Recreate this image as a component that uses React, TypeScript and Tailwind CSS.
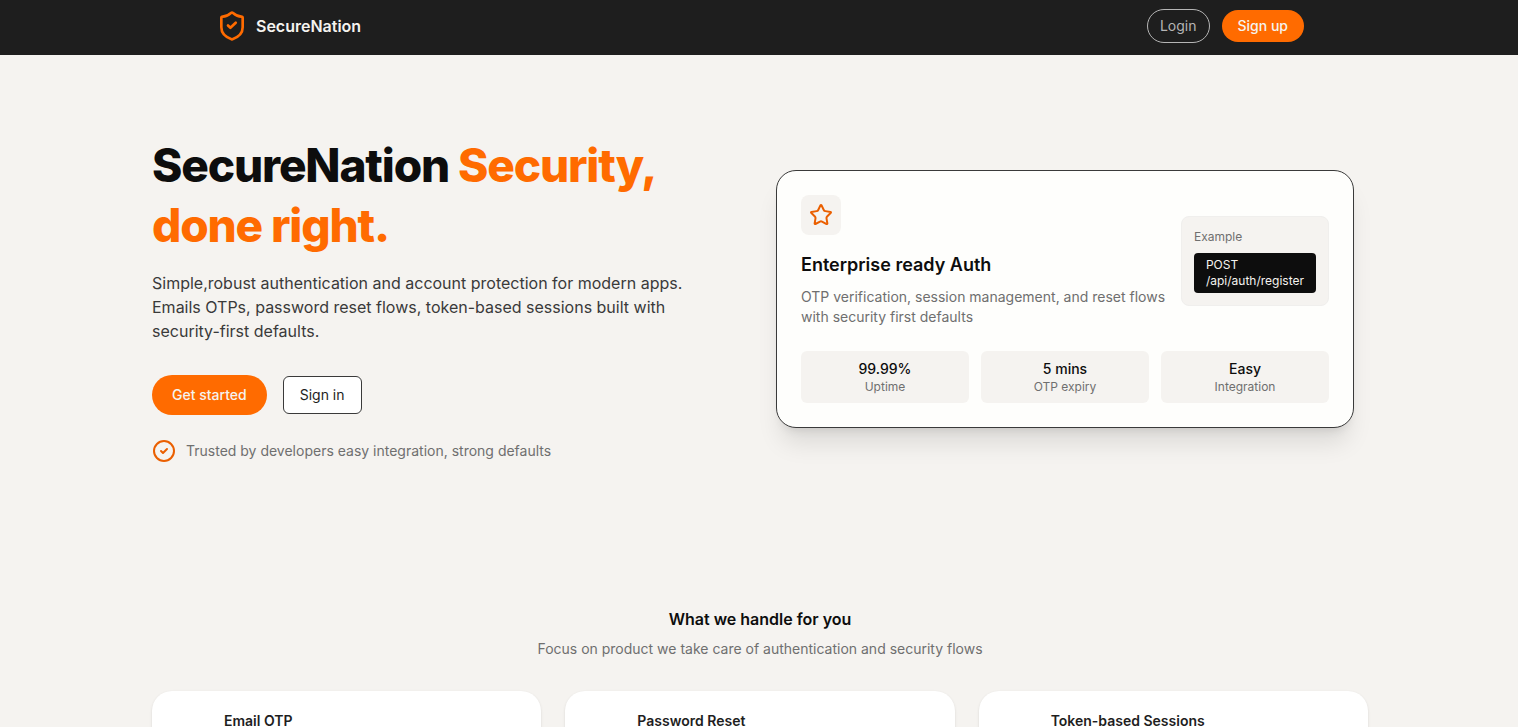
import { Star, CircleCheck } from 'lucide-react';

const stats = [
  { value: '99.99%', label: 'Uptime' },
  { value: '5 mins', label: 'OTP expiry' },
  { value: 'Easy', label: 'Integration' },
];

const features = ['Email OTP', 'Password Reset', 'Token-based Sessions'];

function ShieldLogo() {
  return (
    <svg
      className="w-8 h-8 text-[#ff6b00]"
      viewBox="0 0 24 24"
      fill="none"
      stroke="currentColor"
      strokeWidth="2"
      strokeLinecap="round"
      strokeLinejoin="round"
      aria-hidden="true"
    >
      <path d="M20 13c0 5-3.5 7.5-7.66 8.95a1 1 0 0 1-.67-.01C7.5 20.5 4 18 4 13V6a1 1 0 0 1 1-1c2 0 4.5-1.2 6.24-2.72a1.17 1.17 0 0 1 1.52 0C14.51 3.81 17 5 19 5a1 1 0 0 1 1 1z" />
      <path d="m9 11.6 1.8 1.7 4-3.8" />
    </svg>
  );
}

function Header() {
  return (
    <header className="bg-[#1e1e1e] pl-0.5">
      <div className="max-w-6xl mx-auto px-8 pt-[9px] pb-3 flex items-center justify-between">
        <a href="#" className="flex items-center gap-2">
          <ShieldLogo />
          <span className="text-base font-semibold text-[#f5f3ef]">SecureNation</span>
        </a>
        <nav className="flex items-center gap-3">
          <button className="px-3 py-1 rounded-full border border-[#b5b5b5] text-sm leading-6 text-[#b5b5b5]">
            Login
          </button>
          <button className="px-4 py-1 rounded-full bg-[#ff6b00] text-sm leading-6 font-medium text-[#f5f3ef]">
            Sign up
          </button>
        </nav>
      </div>
    </header>
  );
}

function AuthCard() {
  return (
    <div className="max-w-[578px] rounded-[20px] border border-[#3a3a3a] bg-[#fefefc] p-6 shadow-xl">
      <div className="flex items-center justify-between gap-3">
        <div>
          <div className="w-10 h-10 rounded-lg bg-[#f5f3f0] flex items-center justify-center">
            <Star size={24} className="text-[#ea5f00]" />
          </div>
          <h2 className="mt-4 text-lg font-semibold text-[#0d0d0d]">Enterprise ready Auth</h2>
          <p className="mt-2 text-sm text-[#6f6f6f]">
            OTP verification, session management, and reset flows with security first defaults
          </p>
        </div>
        <div className="shrink-0 rounded-lg border border-[#f0efed] bg-[#f5f3f0] p-3">
          <p className="text-xs text-[#6f6f6f]">Example</p>
          <code className="mt-2 block rounded bg-[#0d0d0d] px-3 py-1 font-[Inter,sans-serif] text-xs text-[#f5f3ef]">
            POST
            <br />
            /api/auth/register
          </code>
        </div>
      </div>
      <div className="mt-6 grid grid-cols-3 gap-3">
        {stats.map((stat) => (
          <div key={stat.label} className="rounded-md bg-[#f5f3f0] py-2 text-center">
            <p className="text-sm font-medium text-[#0d0d0d]">{stat.value}</p>
            <p className="text-xs text-[#6f6f6f]">{stat.label}</p>
          </div>
        ))}
      </div>
    </div>
  );
}

function Hero() {
  return (
    <section className="grid grid-cols-2 items-center gap-8 pt-20">
      <div>
        <h1 className="text-[46px] leading-[60px] font-extrabold tracking-tight text-[#0d0d0d]">
          SecureNation <span className="text-[#ff6b00]">Security,</span>
          <span className="block text-[#ff6b00]">done right.</span>
        </h1>
        <p className="mt-4 max-w-[540px] text-base text-[#3a3a3a]">
          Simple,robust authentication and account protection for modern apps. Emails OTPs, password
          reset flows, token-based sessions built with security-first defaults.
        </p>
        <div className="mt-8 flex items-center gap-4">
          <button className="px-5 py-2 rounded-full bg-[#ff6b00] text-sm leading-6 font-medium text-[#f5f3ef]">
            Get started
          </button>
          <button className="px-4 py-1.5 rounded-md border border-[#3a3a3a] bg-white text-sm leading-6 text-[#1e1e1e]">
            Sign in
          </button>
        </div>
        <div className="mt-6 flex items-center gap-2.5">
          <CircleCheck size={24} className="text-[#ea5f00]" />
          <span className="text-sm text-[#6f6f6f]">
            Trusted by developers easy integration, strong defaults
          </span>
        </div>
      </div>
      <AuthCard />
    </section>
  );
}

function Features() {
  return (
    <section className="pt-36">
      <div className="text-center">
        <h2 className="text-base font-semibold text-[#0d0d0d]">What we handle for you</h2>
        <p className="mt-2 text-sm text-[#6f6f6f]">
          Focus on product we take care of authentication and security flows
        </p>
      </div>
      <div className="mt-8 grid grid-cols-3 gap-6">
        {features.map((title) => (
          <article key={title} className="rounded-[20px] bg-white shadow-sm pt-5 pb-20 pl-[72px] pr-6">
            <h3 className="text-sm font-semibold text-[#1e1e1e]">{title}</h3>
          </article>
        ))}
      </div>
    </section>
  );
}

export default function App() {
  return (
    <div className="min-h-screen bg-[#f5f3f0] font-[Inter,sans-serif]">
      <Header />
      <main className="pl-0.5">
        <div className="max-w-7xl mx-auto px-8">
          <Hero />
          <Features />
        </div>
      </main>
    </div>
  );
}
